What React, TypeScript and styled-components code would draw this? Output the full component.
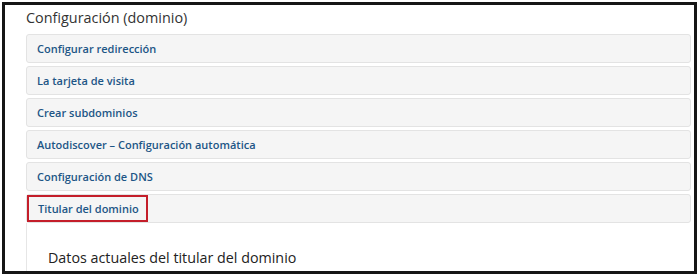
import React from "react";
import styled, { createGlobalStyle } from "styled-components";

const GlobalStyle = createGlobalStyle`
  html, body {
    margin: 0;
    padding: 0;
    background: #ffffff;
    font-family: "Open Sans", "Noto Sans", Arial, sans-serif;
  }
`;

const Frame = styled.div`
  box-sizing: border-box;
  width: 695px;
  height: 272px;
  margin: 2px 0 0 2px;
  border: 3px solid #161616;
  padding: 3px 3px 0 21px;
  overflow: hidden;
  background: #ffffff;
`;

const Title = styled.h2`
  margin: 0 0 6px 0;
  font-size: 14.4px;
  line-height: 20px;
  font-weight: 500;
  color: #333333;
`;

const PanelList = styled.div`
  display: flex;
  flex-direction: column;
  gap: 3px;
`;

const Panel = styled.div`
  box-sizing: border-box;
  height: 29px;
  display: flex;
  align-items: center;
  background: #f5f5f5;
  border: 1px solid #e3e3e3;
  border-radius: 3px;
  padding-left: 10px;
`;

const PanelLink = styled.span<{ $highlight?: boolean }>`
  display: flex;
  align-items: center;
  font-size: 11px;
  font-weight: 600;
  color: #1d5686;
  ${({ $highlight }) =>
    $highlight &&
    `
    height: 27px;
    margin-left: -10px;
    padding: 0 7px 0 9px;
    border: 2px solid #c41e2a;
    box-sizing: border-box;
  `}
`;

const PanelBody = styled.div`
  border-left: 1px solid #e6e6e6;
  padding: 24px 0 0 21px;
  height: 60px;
`;

const BodyHeading = styled.h3`
  margin: 0;
  font-size: 14.3px;
  line-height: 22px;
  font-weight: 500;
  color: #222222;
`;

const items = [
  "Configurar redirección",
  "La tarjeta de visita",
  "Crear subdominios",
  "Autodiscover – Configuración automática",
  "Configuración de DNS",
];

const App: React.FC = () => {
  return (
    <>
      <GlobalStyle />
      <Frame>
        <Title>Configuración (dominio)</Title>
        <PanelList>
          {items.map((item) => (
            <Panel key={item}>
              <PanelLink>{item}</PanelLink>
            </Panel>
          ))}
          <div>
            <Panel>
              <PanelLink $highlight>Titular del dominio</PanelLink>
            </Panel>
            <PanelBody>
              <BodyHeading>Datos actuales del titular del dominio</BodyHeading>
            </PanelBody>
          </div>
        </PanelList>
      </Frame>
    </>
  );
};

export default App;
